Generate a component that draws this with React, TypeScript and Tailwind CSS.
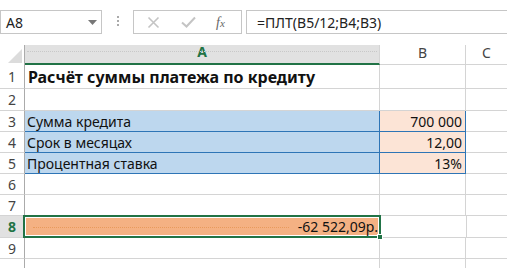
const ROWS = [
  { n: 1, h: "h-[24px]" },
  { n: 2, h: "h-[22px]" },
  { n: 3, h: "h-[21px]" },
  { n: 4, h: "h-[21px]" },
  { n: 5, h: "h-[21px]" },
  { n: 6, h: "h-[21px]" },
  { n: 7, h: "h-[21px]" },
  { n: 8, h: "h-[22px]" },
  { n: 9, h: "h-[21px]" },
  { n: 10, h: "h-[21px]" },
];

const DATA: Record<number, { label: string; value: string }> = {
  3: { label: "Сумма кредита", value: "700 000" },
  4: { label: "Срок в месяцах", value: "12,00" },
  5: { label: "Процентная ставка", value: "13%" },
};

function FormulaBar() {
  return (
    <div className="flex h-[45px] items-start pt-[10px] text-[14px] text-[#222]">
      <div className="flex h-[24px] w-[102px] items-center justify-between border border-[#c6c6c6] pl-[5px] pr-[3px]">
        <span>A8</span>
        <svg width="9" height="5" viewBox="0 0 9 5" className="mr-[1px]">
          <path d="M0 0h9L4.5 5z" fill="#777" />
        </svg>
      </div>
      <div className="flex w-[31px] flex-col items-center gap-[2px] pt-[6px]">
        <span className="h-[2px] w-[2px] bg-[#aaa]" />
        <span className="h-[2px] w-[2px] bg-[#aaa]" />
        <span className="h-[2px] w-[2px] bg-[#aaa]" />
      </div>
      <div className="flex h-[24px] w-[109px] items-center border border-[#c6c6c6] pl-[13px]">
        <svg width="13" height="13" viewBox="0 0 13 13">
          <path d="M1.5 1.5l10 10M11.5 1.5l-10 10" stroke="#c4c4c4" strokeWidth="1.6" />
        </svg>
        <svg width="15" height="12" viewBox="0 0 15 12" className="ml-[21px]">
          <path d="M1 6.5l4.5 4L14 1.5" stroke="#c4c4c4" strokeWidth="2" fill="none" />
        </svg>
        <span className="ml-[20px] font-['Liberation_Serif',serif] text-[14px] italic text-[#666]">
          f<span className="text-[11px]">x</span>
        </span>
      </div>
      <div className="ml-[4px] flex h-[24px] flex-1 items-center border border-r-0 border-[#c6c6c6] pl-[10px]">
        =ПЛТ(B5/12;B4;B3)
      </div>
    </div>
  );
}

export default function App() {
  return (
    <div className="h-[268px] w-[507px] overflow-hidden bg-white font-['Noto_Sans',sans-serif] text-[14px] text-[#111]">
      <FormulaBar />
      {/* column headers */}
      <div className="flex h-[20px]">
        <div className="relative w-[25px] border-r border-[#ababab]">
          <svg width="14" height="14" viewBox="0 0 14 14" className="absolute bottom-[2px] right-[2px]">
            <path d="M14 0v14H0z" fill="#dcdcdc" />
          </svg>
        </div>
        <div className="relative flex w-[355px] items-end justify-center border-b-2 border-r border-b-[#217346] border-r-[#d4d4d4] bg-[#e1e1e1] pb-[1px] font-bold text-[#217346]">
          <div className="absolute left-[2px] right-[2px] top-[6px] border-t border-dotted border-[#c8c8c8]" />
          A
        </div>
        <div className="flex w-[86px] items-end justify-center border-b border-r border-[#d4d4d4] pb-[1px] text-[#444]">B</div>
        <div className="flex flex-1 items-end justify-center border-b border-[#d4d4d4] pb-[1px] text-[#444]">C</div>
      </div>
      {ROWS.map((r) => {
        const d = DATA[r.n];
        const sel = r.n === 8;
        return (
          <div key={r.n} className={`flex ${r.h}`}>
            <div
              className={`flex w-[25px] items-center justify-center border-b border-r border-b-[#d4d4d4] border-r-[#ababab] text-[14px] ${
                sel ? "bg-[#e1e1e1] font-bold text-[#217346]" : "text-[#444]"
              }`}
            >
              {r.n < 10 ? r.n : ""}
            </div>
            {sel ? (
              <div className="relative -ml-[2px] -mt-[1px] flex w-[358px] items-center justify-end border-2 border-[#217346] bg-[#f4b183] pr-[1px] text-[14px] shadow-[inset_0_0_0_1px_#fff]">
                <div className="absolute left-[8px] right-[90px] top-1/2 border-t border-dotted border-[#e89a5c]" />
                -62 522,09р.
                <span className="absolute -bottom-[4px] -right-[4px] h-[6px] w-[6px] border border-white bg-[#217346]" />
              </div>
            ) : d ? (
              <div className="flex w-[355px] items-center border-b border-r border-[#2e75b6] bg-[#bdd7ee] pl-[2px]">
                {d.label}
              </div>
            ) : (
              <div className="flex w-[355px] items-center border-b border-r border-[#d4d4d4] pl-[3px] text-[16px] font-bold">
                {r.n === 1 ? "Расчёт суммы платежа по кредиту" : ""}
              </div>
            )}
            {d ? (
              <div className="flex w-[86px] items-center justify-end border-b border-r border-[#2e75b6] bg-[#fce4d6] pr-[3px]">
                {d.value}
              </div>
            ) : (
              <div className="w-[86px] border-b border-r border-[#d4d4d4]" />
            )}
            <div className="flex-1 border-b border-[#d4d4d4]" />
          </div>
        );
      })}
    </div>
  );
}
